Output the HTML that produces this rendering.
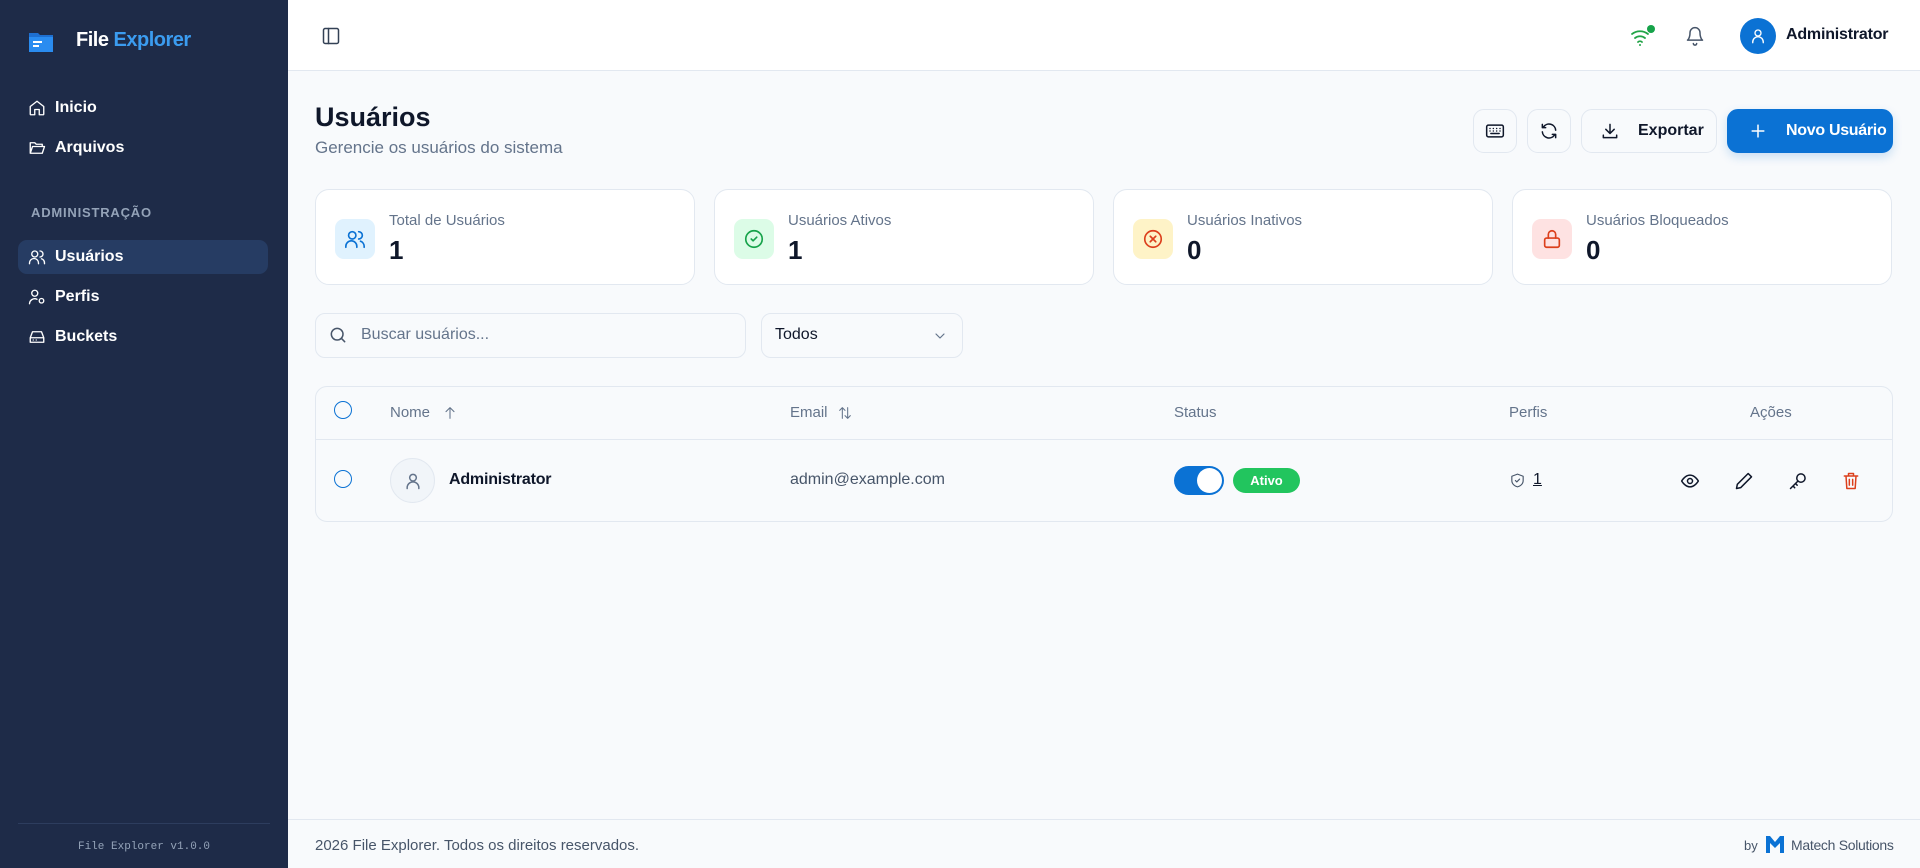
<!DOCTYPE html>
<html><head><meta charset="utf-8"><style>
*{box-sizing:border-box;margin:0;padding:0}
body{width:1920px;height:868px;overflow:hidden;font-family:"Liberation Sans",sans-serif;background:#f8fafc;position:relative;color:#0f172a;white-space:nowrap}
.abs{position:absolute}
.side{left:0;top:0;width:288px;height:868px;background:#1e2b48}
.nav{position:absolute;left:18px;width:250px;height:34px;display:flex;align-items:center;padding-left:10px;color:#fff;font-size:16px;font-weight:600;border-radius:9px}
.nav svg{width:18px;height:18px;margin-right:9px;fill:none;stroke:#fff;stroke-width:1.8;stroke-linecap:round;stroke-linejoin:round}
.card{position:absolute;top:189px;height:96px;width:380px;background:#fff;border:1px solid #e2e8f0;border-radius:14px}
.ib{position:absolute;left:19px;top:29px;width:40px;height:40px;border-radius:9px;display:flex;align-items:center;justify-content:center}
.ib svg{width:22px;height:22px;fill:none;stroke-width:1.8;stroke-linecap:round;stroke-linejoin:round}
.cl{position:absolute;left:73px;top:22px;font-size:15px;color:#64748b}
.cn{position:absolute;left:73px;top:45px;font-size:26px;font-weight:700;color:#0f172a}
.btn{position:absolute;top:109px;height:44px;border:1px solid #e2e8f0;border-radius:11px;background:#f8fafc;display:flex;align-items:center;justify-content:center}
.btn svg{width:20px;height:20px;fill:none;stroke:#0f172a;stroke-width:1.8;stroke-linecap:round;stroke-linejoin:round;flex:none}
.th{position:absolute;top:404px;font-size:15px;color:#64748b}
.ic{fill:none;stroke:#0f172a;stroke-width:1.8;stroke-linecap:round;stroke-linejoin:round}
</style></head><body>
<div class="abs side">
  <svg class="abs" style="left:27px;top:29px" width="28" height="25" viewBox="0 0 28 25"><path d="M2 4h9l2 2h13v17H2z" fill="#1e6fd0"/><path d="M2 8h24v15H2z" fill="#2a8cf0"/><rect x="6" y="12" width="9" height="2" fill="#fff"/><rect x="6" y="16" width="6" height="2" fill="#fff"/></svg>
  <div class="abs" style="left:76px;top:29px;font-size:20px;font-weight:700;color:#fff;letter-spacing:-0.5px">File <span style="color:#3b9cf0">Explorer</span></div>
  <div class="nav" style="top:91px"><svg viewBox="0 0 24 24"><path d="M3 10l9-7 9 7v10a1 1 0 0 1-1 1h-5v-7H9v7H4a1 1 0 0 1-1-1z"/></svg>Inicio</div>
  <div class="nav" style="top:131px"><svg viewBox="0 0 24 24"><path d="M3 19V5h6l2 2h8v3M3 19l3-9h16l-3 9z"/></svg>Arquivos</div>
  <div class="abs" style="left:31px;top:205px;font-size:13px;color:#94a3b8;letter-spacing:0.8px;font-weight:600">ADMINISTRAÇÃO</div>
  <div class="nav" style="top:240px;background:#263c63"><svg viewBox="0 0 24 24"><circle cx="9" cy="8" r="4"/><path d="M2 21v-1a6 6 0 0 1 12 0v1M16 4a4 4 0 0 1 0 8M22 21v-1a6 6 0 0 0-4-5.6"/></svg>Usuários</div>
  <div class="nav" style="top:280px"><svg viewBox="0 0 24 24"><circle cx="9" cy="7" r="4"/><path d="M2 21a7 7 0 0 1 10-6"/><circle cx="18" cy="17" r="3"/></svg>Perfis</div>
  <div class="nav" style="top:320px"><svg viewBox="0 0 24 24"><path d="M3 13l3-8h12l3 8v6H3zM3 13h18M7 16h.01M11 16h.01"/></svg>Buckets</div>
  <div class="abs" style="left:18px;top:823px;width:252px;height:1px;background:#2d3d5e"></div>
  <div class="abs" style="left:0;width:288px;top:841px;text-align:center;font-family:'Liberation Mono',monospace;font-size:11px;color:#94a3b8">File Explorer v1.0.0</div>
</div>
<div class="abs" style="left:288px;top:0;width:1632px;height:71px;background:#fff;border-bottom:1px solid #e2e8f0"></div>
<svg class="abs ic" style="left:321px;top:26px;stroke:#334155" width="20" height="20" viewBox="0 0 24 24"><rect x="3" y="3" width="18" height="18" rx="2"/><path d="M9 3v18"/></svg>
<svg class="abs" style="left:1630px;top:24px" width="26" height="24" viewBox="0 0 26 24"><g fill="none" stroke="#22a447" stroke-width="1.8" stroke-linecap="round"><path d="M2 10a13 13 0 0 1 16 0M5 14a8 8 0 0 1 10 0M8 18a3 3 0 0 1 4 0"/></g><circle cx="10" cy="21" r="1" fill="#22a447"/><circle cx="21" cy="5" r="4" fill="#16a34a"/></svg>
<svg class="abs ic" style="left:1685px;top:26px;stroke:#475569" width="20" height="20" viewBox="0 0 24 24"><path d="M6 8a6 6 0 0 1 12 0c0 7 3 9 3 9H3s3-2 3-9M10 21a2 2 0 0 0 4 0"/></svg>
<div class="abs" style="left:1740px;top:18px;width:36px;height:36px;border-radius:50%;background:#0b72d4;display:flex;align-items:center;justify-content:center"><svg width="18" height="18" viewBox="0 0 24 24" class="ic" style="stroke:#fff"><circle cx="12" cy="8" r="4"/><path d="M5 21v-1a7 7 0 0 1 14 0v1"/></svg></div>
<div class="abs" style="left:1786px;top:26px;font-size:16px;font-weight:600;color:#0f172a;letter-spacing:-0.2px">Administrator</div>

<div class="abs" style="left:315px;top:102px;font-size:27px;font-weight:700;color:#0f172a">Usuários</div>
<div class="abs" style="left:315px;top:138px;font-size:17px;color:#64748b">Gerencie os usuários do sistema</div>
<div class="btn" style="left:1473px;width:44px"><svg viewBox="0 0 24 24"><rect x="2" y="5" width="20" height="14" rx="2"/><path d="M6 9h.01M10 9h.01M14 9h.01M18 9h.01M6 12h.01M10 12h.01M14 12h.01M18 12h.01M7 15h10"/></svg></div>
<div class="btn" style="left:1527px;width:44px"><svg viewBox="0 0 24 24"><path d="M20 11a8 8 0 0 0-14.5-4M4 4v4h4M4 13a8 8 0 0 0 14.5 4M20 20v-4h-4"/></svg></div>
<div class="btn" style="left:1581px;width:136px;justify-content:flex-start;padding-left:18px"><svg viewBox="0 0 24 24"><path d="M12 4v11M7 10l5 5 5-5M4 17v3h16v-3"/></svg><span style="margin-left:18px;font-size:16px;font-weight:600">Exportar</span></div>
<div class="btn" style="left:1727px;width:166px;background:#0b72d4;border-color:#0b72d4;justify-content:flex-start;padding-left:20px;box-shadow:0 4px 10px rgba(11,114,212,.2)"><svg viewBox="0 0 24 24" style="stroke:#fff"><path d="M12 5v14M5 12h14"/></svg><span style="margin-left:18px;font-size:16px;font-weight:600;color:#fff;letter-spacing:-0.3px">Novo Usuário</span></div>

<div class="card" style="left:315px"><div class="ib" style="background:#e0f2fe"><svg viewBox="0 0 24 24" style="stroke:#0b72d4"><circle cx="9" cy="8" r="4"/><path d="M2 21v-1a6 6 0 0 1 12 0v1M16 4a4 4 0 0 1 0 8M22 21v-1a6 6 0 0 0-4-5.6"/></svg></div><div class="cl">Total de Usuários</div><div class="cn">1</div></div>
<div class="card" style="left:714px"><div class="ib" style="background:#dcfce7"><svg viewBox="0 0 24 24" style="stroke:#16a34a"><circle cx="12" cy="12" r="9"/><path d="M9 12l2 2 4-4"/></svg></div><div class="cl">Usuários Ativos</div><div class="cn">1</div></div>
<div class="card" style="left:1113px"><div class="ib" style="background:#fef3c7"><svg viewBox="0 0 24 24" style="stroke:#dc3f1c"><circle cx="12" cy="12" r="9"/><path d="M9 9l6 6M15 9l-6 6"/></svg></div><div class="cl">Usuários Inativos</div><div class="cn">0</div></div>
<div class="card" style="left:1512px"><div class="ib" style="background:#fee2e2"><svg viewBox="0 0 24 24" style="stroke:#dc3f1c"><rect x="4" y="11" width="16" height="10" rx="2"/><path d="M8 11V7a4 4 0 0 1 8 0v4"/></svg></div><div class="cl">Usuários Bloqueados</div><div class="cn">0</div></div>

<div class="abs" style="left:315px;top:313px;width:431px;height:45px;border:1px solid #e2e8f0;border-radius:10px;background:#f8fafc"></div>
<svg class="abs ic" style="left:328px;top:325px;stroke:#475569" width="20" height="20" viewBox="0 0 24 24"><circle cx="11" cy="11" r="7"/><path d="M20 20l-4-4"/></svg>
<div class="abs" style="left:361px;top:326px;font-size:16px;color:#64748b">Buscar usuários...</div>
<div class="abs" style="left:761px;top:313px;width:202px;height:45px;border:1px solid #e2e8f0;border-radius:10px;background:#f8fafc"></div>
<div class="abs" style="left:775px;top:326px;font-size:16px;color:#0f172a">Todos</div>
<svg class="abs ic" style="left:932px;top:328px;stroke:#64748b" width="16" height="16" viewBox="0 0 24 24"><path d="M6 9l6 6 6-6"/></svg>

<div class="abs" style="left:315px;top:386px;width:1578px;height:136px;border:1px solid #e2e8f0;border-radius:12px;background:#f8fafc"></div>
<div class="abs" style="left:316px;top:439px;width:1576px;height:1px;background:#e2e8f0"></div>
<div class="abs" style="left:334px;top:401px;width:18px;height:18px;border:1.5px solid #0b72d4;border-radius:50%"></div>
<div class="th" style="left:390px">Nome</div>
<svg class="abs ic" style="left:442px;top:405px;stroke:#64748b;stroke-width:1.6" width="16" height="16" viewBox="0 0 24 24"><path d="M12 20V4M6 10l6-6 6 6"/></svg>
<div class="th" style="left:790px">Email</div>
<svg class="abs ic" style="left:836px;top:405px;stroke:#64748b;stroke-width:1.6" width="18" height="16" viewBox="0 0 24 24"><path d="M8 20V4M4 8l4-4 4 4M16 4v16M12 16l4 4 4-4"/></svg>
<div class="th" style="left:1174px">Status</div>
<div class="th" style="left:1509px">Perfis</div>
<div class="th" style="left:1750px">Ações</div>
<div class="abs" style="left:334px;top:470px;width:18px;height:18px;border:1.5px solid #0b72d4;border-radius:50%"></div>
<div class="abs" style="left:390px;top:458px;width:45px;height:45px;border-radius:50%;background:#f1f5f9;border:1px solid #e2e8f0;display:flex;align-items:center;justify-content:center"><svg width="20" height="20" viewBox="0 0 24 24" class="ic" style="stroke:#64748b"><circle cx="12" cy="8" r="4"/><path d="M5 21v-1a7 7 0 0 1 14 0v1"/></svg></div>
<div class="abs" style="left:449px;top:471px;font-size:16px;font-weight:600;letter-spacing:-0.2px">Administrator</div>
<div class="abs" style="left:790px;top:471px;font-size:16px;color:#475569">admin@example.com</div>
<div class="abs" style="left:1174px;top:466px;width:50px;height:29px;border-radius:15px;background:#0b72d4"><div class="abs" style="left:23px;top:2px;width:25px;height:25px;border-radius:50%;background:#fff"></div></div>
<div class="abs" style="left:1233px;top:468px;width:67px;height:25px;border-radius:13px;background:#22c55e;color:#fff;font-size:13px;font-weight:700;display:flex;align-items:center;justify-content:center">Ativo</div>
<svg class="abs ic" style="left:1509px;top:472px;stroke:#475569;stroke-width:1.6" width="17" height="17" viewBox="0 0 24 24"><path d="M12 3l8 3v6c0 5-4 8-8 9-4-1-8-4-8-9V6z"/><path d="M9 12l2 2 4-4"/></svg>
<div class="abs" style="left:1533px;top:471px;font-size:16px;color:#0f172a;text-decoration:underline">1</div>
<svg class="abs ic" style="left:1680px;top:471px" width="20" height="20" viewBox="0 0 24 24"><path d="M2 12s4-7 10-7 10 7 10 7-4 7-10 7S2 12 2 12z"/><circle cx="12" cy="12" r="3"/></svg>
<svg class="abs ic" style="left:1734px;top:471px" width="20" height="20" viewBox="0 0 24 24"><path d="M17 3l4 4L8 20l-5 1 1-5z"/></svg>
<svg class="abs ic" style="left:1788px;top:471px" width="20" height="20" viewBox="0 0 24 24"><circle cx="15.5" cy="8.5" r="5"/><path d="M12 12L3 21M6 18l2 2M9 15l2 2"/></svg>
<svg class="abs ic" style="left:1841px;top:471px;stroke:#dc3f1c" width="20" height="20" viewBox="0 0 24 24"><path d="M4 6h16M9 6V3h6v3M6 6l1 15h10l1-15M10 10v7M14 10v7"/></svg>

<div class="abs" style="left:288px;top:819px;width:1632px;height:1px;background:#e2e8f0"></div>
<div class="abs" style="left:315px;top:837px;font-size:15px;color:#475569">2026 File Explorer. Todos os direitos reservados.</div>
<div class="abs" style="left:1744px;top:838px;font-size:13px;color:#475569">by</div>
<svg class="abs" style="left:1765px;top:835px" width="20" height="19" viewBox="0 0 20 19"><path d="M1 1h4l5 6 5-6h4v17h-4V8l-5 5-5-5v10H1z" fill="#0b72d4"/></svg>
<div class="abs" style="left:1791px;top:837px;font-size:14px;color:#475569;letter-spacing:-0.3px">Matech Solutions</div>
</body></html>
